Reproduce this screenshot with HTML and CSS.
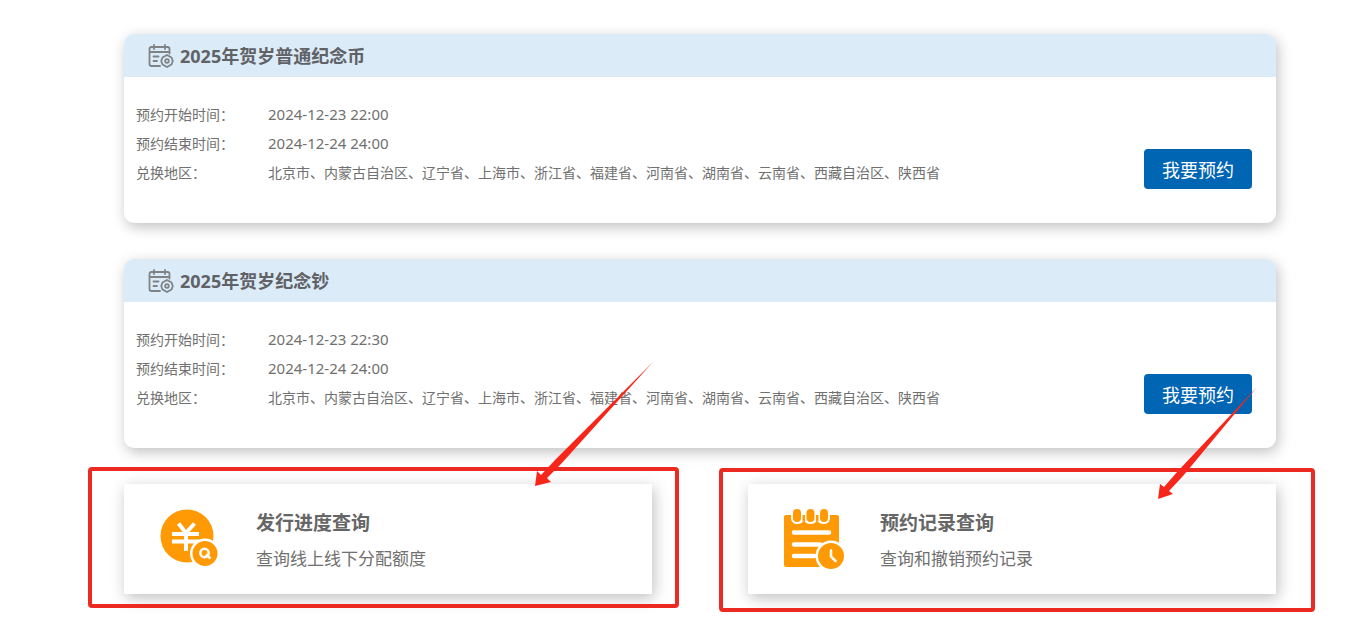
FILE: index.html
```html
<!DOCTYPE html>
<html lang="zh-CN">
<head>
<meta charset="utf-8">
<meta name="viewport" content="width=device-width, initial-scale=1">
<title>纪念币预约</title>
<link rel="stylesheet" href="styles.css">
</head>
<body>
<svg width="0" height="0" class="symbols" aria-hidden="true">
  <symbol id="calendar" viewBox="0 0 26 24">
    <g fill="none" stroke="currentColor" stroke-width="1.8" stroke-linecap="round" stroke-linejoin="round">
      <path d="M12 22H3.500Q1.500 22 1.500 20V5Q1.500 3 3.500 3H19.500Q21.500 3 21.500 5V9.500M1.500 8H21.500M6 1V5M17 1V5M5.500 12.500H10.500M5.500 17H9"/>
      <path d="M19 11L23.500 13.500L24.800 17L23.500 20.500L19 23L14.500 20.500L13.200 17L14.500 13.500Z"/>
      <circle cx="19" cy="17" r="1.800"/>
    </g>
  </symbol>
</svg>
<main class="page">
  <section class="notice">
    <h2 class="notice-title"><svg class="notice-icon" aria-hidden="true"><use href="#calendar"/></svg>2025年贺岁普通纪念币</h2>
    <div class="notice-body">
      <dl class="details">
        <dt>预约开始时间：</dt><dd class="date">2024-12-23 22:00</dd>
        <dt>预约结束时间：</dt><dd class="date">2024-12-24 24:00</dd>
        <dt>兑换地区：</dt><dd>北京市、内蒙古自治区、辽宁省、上海市、浙江省、福建省、河南省、湖南省、云南省、西藏自治区、陕西省</dd>
      </dl>
      <button class="reserve" type="button">我要预约</button>
    </div>
  </section>
  <section class="notice">
    <h2 class="notice-title"><svg class="notice-icon" aria-hidden="true"><use href="#calendar"/></svg>2025年贺岁纪念钞</h2>
    <div class="notice-body">
      <dl class="details">
        <dt>预约开始时间：</dt><dd class="date">2024-12-23 22:30</dd>
        <dt>预约结束时间：</dt><dd class="date">2024-12-24 24:00</dd>
        <dt>兑换地区：</dt><dd>北京市、内蒙古自治区、辽宁省、上海市、浙江省、福建省、河南省、湖南省、云南省、西藏自治区、陕西省</dd>
      </dl>
      <button class="reserve" type="button">我要预约</button>
    </div>
  </section>
  <div class="queries">
    <div class="query">
      <a class="query-link" href="#progress">
        <svg class="query-icon" viewBox="0 0 64 64" aria-hidden="true">
          <circle cx="27" cy="29" r="26.500" fill="#ff9a05"/>
          <path d="M18.500 16.500L26 26L34.500 16.500M12 27H39M12 34.500H39M26 26V44" fill="none" stroke="#fff" stroke-width="4"/>
          <circle cx="45" cy="46.500" r="15" fill="#fff"/>
          <circle cx="45" cy="46.500" r="12.500" fill="#ff9a05"/>
          <circle cx="44.500" cy="46" r="4.200" fill="none" stroke="#fff" stroke-width="2.500"/>
          <path d="M46 47.500L50.500 51.500" stroke="#fff" stroke-width="2.500"/>
        </svg>
        <span class="query-text"><strong class="query-title">发行进度查询</strong><span class="query-note">查询线上线下分配额度</span></span>
      </a>
      <span class="mark mark-progress"></span>
      <svg class="arrow arrow-progress" viewBox="0 0 122 128" aria-hidden="true">
        <path d="M121 2L29 104L15 118L19 122L3 126L5 111L9 115L24 99Z" fill="#f7261b"/>
      </svg>
    </div>
    <div class="query">
      <a class="query-link" href="#records">
        <svg class="query-icon" viewBox="0 0 64 64" aria-hidden="true">
          <rect x="0" y="8" width="55" height="52" rx="2" fill="#ff9a05"/>
          <path d="M7 7H46V12Q45 17 39.500 17Q34.500 17 33 13Q31.500 17 26.500 17Q21.500 17 20 13Q18.500 17 13 17Q8 17 7 12Z" fill="#fff"/>
          <path d="M18 7H21.500V13Q20 15 18 13ZM31.500 7H35V13Q33 15 31.500 13Z" fill="#fff"/>
          <g fill="#ff9a05">
            <rect x="9" y="2" width="8" height="13" rx="4"/>
            <rect x="22.500" y="2" width="8" height="13" rx="4"/>
            <rect x="36" y="2" width="8" height="13" rx="4"/>
            <path d="M18.500 8H21V15Q19.700 12 18.500 15ZM32 8H34.500V15Q33.200 12 32 15Z"/>
          </g>
          <path d="M10 25.500H45M10 37.500H36M10 49H30" stroke="#fff" stroke-width="4.500" stroke-linecap="round"/>
          <circle cx="47" cy="49" r="15.500" fill="#fff"/>
          <circle cx="47" cy="49" r="13" fill="#ff9a05"/>
          <path d="M47 43.500V49.500L51.500 54" fill="none" stroke="#fff" stroke-width="2.500" stroke-linecap="round"/>
        </svg>
        <span class="query-text"><strong class="query-title">预约记录查询</strong><span class="query-note">查询和撤销预约记录</span></span>
      </a>
      <span class="mark mark-records"></span>
      <svg class="arrow arrow-records" viewBox="0 0 104 116" aria-hidden="true">
        <path d="M102 2L28 91L14 106L18 109L3 114L5 99L9 102L23 86Z" fill="#f7261b"/>
      </svg>
    </div>
  </div>
</main>
</body>
</html>
```
FILE: styles.css
```css
* {
  box-sizing: border-box;
}

body {
  margin: 0;
  background: #fff;
  color: #707070;
  font-family: "Noto Sans", "Noto Sans CJK SC", sans-serif;
  font-size: 14px;
}

.symbols {
  position: absolute;
}

.page {
  display: flex;
  flex-direction: column;
  gap: 36px;
  padding: 34px 80px 24px 124px;
}

.notice {
  border-radius: 10px;
  background: #fff;
  box-shadow: 2px 4px 14px rgba(0, 0, 0, 0.25);
  overflow: hidden;
}

.notice-title {
  display: flex;
  align-items: center;
  gap: 6px;
  height: 43px;
  margin: 0;
  padding: 0 24px;
  background: #dbebf8;
  color: #606266;
  font-size: 18px;
  line-height: 26px;
}

.notice-icon {
  width: 26px;
  height: 24px;
  color: #808386;
}

.notice-body {
  display: flex;
  justify-content: space-between;
  align-items: flex-end;
  padding: 23px 24px 34px 12px;
}

.details {
  display: grid;
  grid-template-columns: 132px 1fr;
  margin: 0;
  padding-bottom: 2px;
  line-height: 29px;
}

.details dt,
.details dd {
  margin: 0;
}

.details .date {
  font-size: 15px;
}

.reserve {
  flex: none;
  width: 108px;
  height: 40px;
  border: 0;
  border-radius: 4px;
  padding: 0;
  background: #0065b3;
  color: #fff;
  font-family: inherit;
  font-size: 18px;
}

.queries {
  display: grid;
  grid-template-columns: 1fr 1fr;
  gap: 96px;
}

.query {
  position: relative;
}

.query-link {
  display: flex;
  align-items: center;
  gap: 32px;
  height: 110px;
  padding: 0 36px;
  background: #fff;
  box-shadow: 2px 4px 14px rgba(0, 0, 0, 0.25);
  color: inherit;
  text-decoration: none;
}

.query-icon {
  flex: none;
  width: 64px;
  height: 64px;
}

.query-text {
  display: flex;
  flex-direction: column;
  gap: 8px;
  padding-top: 4px;
}

.query-title {
  color: #666;
  font-size: 19px;
  line-height: 28px;
}

.query-note {
  font-size: 17px;
  line-height: 28px;
}

.mark {
  position: absolute;
  border: 4px solid #ec2a22;
  border-radius: 4px;
  pointer-events: none;
}

.mark-progress {
  inset: -17px -27px -14px -36px;
}

.mark-records {
  inset: -16px -39px -18px -29px;
}

.arrow {
  position: absolute;
  pointer-events: none;
}

.arrow-progress {
  top: -124px;
  right: -2px;
  width: 122px;
  height: 128px;
}

.arrow-records {
  top: -99px;
  right: 17px;
  width: 104px;
  height: 116px;
}
```
